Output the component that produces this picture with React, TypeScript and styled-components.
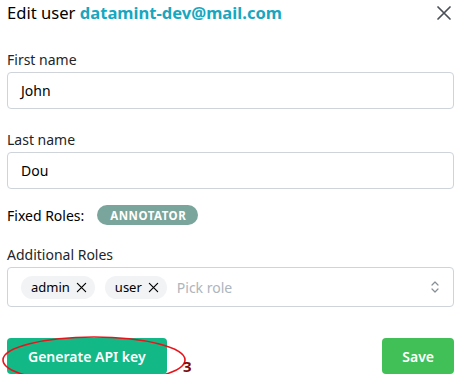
import * as React from 'react';
import styled, { createGlobalStyle } from 'styled-components';

const Global = createGlobalStyle`
	body {
		margin: 0;
		background: #fff;
		font-family: 'Noto Sans', 'Open Sans', sans-serif;
		color: #000;
	}
`;

const Modal = styled.div`
	width: 447px;
	padding: 0 5px 0 7px;
	display: flex;
	flex-direction: column;
`;

const Header = styled.div`
	height: 26px;
	display: flex;
	align-items: center;
	justify-content: space-between;
`;

const Title = styled.div`
	font-size: 16.6px;
	line-height: 20px;
	color: #000;
`;

const Email = styled.span`
	color: #17a7c0;
	font-weight: 700;
`;

const CloseButton = styled.button`
	width: 26px;
	height: 26px;
	border: none;
	background: none;
	padding: 0;
	margin-right: -3px;
	display: flex;
	align-items: center;
	justify-content: center;
	color: #495057;
`;

const Field = styled.div<{ $top: number }>`
	display: flex;
	flex-direction: column;
	margin-top: ${p => p.$top}px;
`;

const Label = styled.label`
	font-size: 14px;
	line-height: 20px;
	margin-bottom: 2px;
	color: #212529;
`;

const TextInput = styled.div`
	height: 35px;
	border: 1px solid #ced4da;
	border-radius: 4px;
	display: flex;
	align-items: center;
	padding: 0 13px;
	font-size: 14px;
	color: #000;
`;

const InlineRow = styled.div`
	display: flex;
	align-items: center;
	gap: 13px;
	margin-top: 16px;
	font-size: 14px;
	height: 20px;
`;

const Badge = styled.span`
	background: #7aa59c;
	color: #fff;
	font-size: 11.5px;
	font-weight: 700;
	letter-spacing: 0.5px;
	height: 20px;
	padding: 0 12px 0 13px;
	border-radius: 10px;
	display: flex;
	align-items: center;
`;

const MultiSelect = styled.div`
	height: 38px;
	border: 1px solid #ced4da;
	border-radius: 4px;
	display: flex;
	align-items: center;
	padding: 0 12px 0 13px;
	gap: 10px;
`;

const Pill = styled.span`
	background: #f1f3f5;
	border-radius: 12px;
	height: 23px;
	padding: 0 8px 0 10px;
	display: flex;
	align-items: center;
	gap: 6px;
	font-size: 13px;
	color: #000;
`;

const Placeholder = styled.span`
	flex: 1;
	color: #adb5bd;
	font-size: 14px;
`;

const Footer = styled.div`
	margin-top: 31px;
	display: flex;
	justify-content: space-between;
	position: relative;
`;

const Button = styled.button<{ $color: string; $pad: number }>`
	height: 36px;
	border: none;
	border-radius: 4px;
	background: ${p => p.$color};
	color: #fff;
	font-family: inherit;
	font-size: 14px;
	font-weight: 600;
	padding: 0 ${p => p.$pad}px;
`;

const Annotation = styled.svg`
	position: absolute;
	left: -7px;
	top: -6px;
	pointer-events: none;
`;

const Marker = styled.span`
	position: absolute;
	left: 176px;
	top: 19px;
	color: #7a0a0a;
	font-weight: 700;
	font-size: 15px;
	line-height: 18px;
`;

const Cross = ({ size = 12 }: { size?: number }) => (
	<svg width={size} height={size} viewBox="0 0 12 12" fill="none">
		<path d="M1.5 1.5 L10.5 10.5 M10.5 1.5 L1.5 10.5" stroke="currentColor" strokeWidth="1.3" strokeLinecap="round" />
	</svg>
);

const App: React.FunctionComponent = () => {
	return (
		<>
			<Global />
			<Modal>
				<Header>
					<Title>
						Edit user <Email>datamint-dev@mail.com</Email>
					</Title>
					<CloseButton>
						<Cross size={16} />
					</CloseButton>
				</Header>

				<Field $top={24}>
					<Label>First name</Label>
					<TextInput>John</TextInput>
				</Field>

				<Field $top={21}>
					<Label>Last name</Label>
					<TextInput>Dou</TextInput>
				</Field>

				<InlineRow>
					Fixed Roles:
					<Badge>ANNOTATOR</Badge>
				</InlineRow>

				<Field $top={20}>
					<Label>Additional Roles</Label>
					<MultiSelect>
						<Pill>
							admin <Cross size={11} />
						</Pill>
						<Pill>
							user <Cross size={11} />
						</Pill>
						<Placeholder>Pick role</Placeholder>
						<svg width="12" height="16" viewBox="0 0 12 16" fill="none">
							<path d="M3 6 L6 3 L9 6 M3 10 L6 13 L9 10" stroke="#868e96" strokeWidth="1.2" strokeLinecap="round" strokeLinejoin="round" />
						</svg>
					</MultiSelect>
				</Field>

				<Footer>
					<Button $color="#12b886" $pad={21}>Generate API key</Button>
					<Button $color="#40c057" $pad={20}>Save</Button>
					<Annotation width="192" height="56" viewBox="0 0 192 56">
						<ellipse cx="94" cy="28" rx="91" ry="23" fill="none" stroke="#e8141c" strokeWidth="1.6" />
					</Annotation>
					<Marker>3</Marker>
				</Footer>
			</Modal>
		</>
	);
};

export default App;
